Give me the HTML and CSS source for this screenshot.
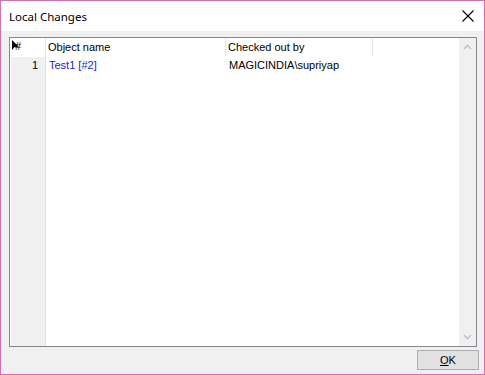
FILE: index.html
```html
<!DOCTYPE html>
<html lang="en">
<head>
    <meta charset="UTF-8">
    <title>Local Changes</title>
    <link rel="stylesheet" href="styles.css">
</head>
<body>

    <div class="window">
        <div class="titlebar">
            <span class="title">Local Changes</span>
            <svg class="close" width="12" height="12" viewBox="0 0 12 12">
                <path d="M0.5 0.5 L11.5 11.5 M11.5 0.5 L0.5 11.5" stroke="#000" stroke-width="1.1" fill="none"/>
            </svg>
        </div>

        <div class="content">
            <div class="grid">
                <div class="grid-main">
                    <div class="row-header-col">
                        <div class="corner">
                            <svg width="10" height="12" viewBox="0 0 10 12">
                                <path d="M1 1 L1 11 L3.5 8 L8 8 Z" fill="#000"/>
                            </svg>
                            <span class="hash">#</span>
                        </div>
                        <div class="row-num">1</div>
                    </div>
                    <div class="cols">
                        <div class="header">
                            <div class="hcell c-name">Object name</div>
                            <div class="hcell c-user">Checked out by</div>
                            <div class="hcell c-rest"></div>
                        </div>
                        <div class="row">
                            <div class="cell c-name link">Test1 [#2]</div>
                            <div class="cell c-user">MAGICINDIA\supriyap</div>
                        </div>
                    </div>
                </div>
                <div class="scrollbar">
                    <svg width="9" height="6" viewBox="0 0 9 6">
                        <path d="M1 5 L4.5 1.5 L8 5" stroke="#c2c2c2" stroke-width="1.6" fill="none"/>
                    </svg>
                    <svg width="9" height="6" viewBox="0 0 9 6">
                        <path d="M1 1 L4.5 4.5 L8 1" stroke="#c2c2c2" stroke-width="1.6" fill="none"/>
                    </svg>
                </div>
            </div>

            <div class="footer">
                <button class="ok"><u>O</u>K</button>
            </div>
        </div>
    </div>

</body>
</html>
```

FILE: styles.css
```css
body {
    margin: 0;
    font-family: 'Liberation Sans', Arial, sans-serif;
    font-size: 11px;
    background-color: #ffffff;
}

.window {
    width: 485px;
    height: 375px;
    box-sizing: border-box;
    border: 1px solid #e06aae;
    display: flex;
    flex-direction: column;
}

.titlebar {
    height: 30px;
    background-color: #ffffff;
    display: flex;
    align-items: center;
    justify-content: space-between;
    padding: 0 10px 0 8px;
}

.title {
    font-family: 'Noto Sans', 'Open Sans', sans-serif;
    font-size: 11.5px;
    color: #000;
}

.close {
    display: block;
}

.content {
    flex: 1;
    background-color: #f0f0f0;
    padding: 6px 7px 0 8px;
    display: flex;
    flex-direction: column;
}

.grid {
    height: 308px;
    border: 1px solid #828790;
    background-color: #ffffff;
    display: flex;
}

.grid-main {
    flex: 1;
    display: flex;
}

.row-header-col {
    width: 34px;
    margin-left: 1px;
    border-right: 1px solid #e3e3e3;
    background-color: #f0f0f0;
    display: flex;
    flex-direction: column;
}

.corner {
    height: 18px;
    background-color: #ffffff;
    display: flex;
    align-items: flex-start;
    padding-top: 1px;
}

.corner svg {
    display: block;
}

.hash {
    margin-left: -6px;
    margin-top: 1px;
}

.row-num {
    height: 16px;
    line-height: 16px;
    text-align: right;
    padding-right: 7px;
}

.cols {
    flex: 1;
    display: flex;
    flex-direction: column;
}

.header {
    height: 19px;
    display: flex;
}

.hcell {
    height: 18px;
    line-height: 18px;
    padding-left: 2px;
    border-right: 1px solid #e3e3e3;
    box-sizing: border-box;
}

.row {
    height: 16px;
    display: flex;
}

.cell {
    line-height: 16px;
    padding-left: 3px;
    box-sizing: border-box;
}

.c-name {
    width: 180px;
}

.c-user {
    width: 147px;
}

.c-rest {
    flex: 1;
    border-right: none;
}

.link {
    color: #2222dd;
}

.scrollbar {
    width: 17px;
    background-color: #f0f0f0;
    display: flex;
    flex-direction: column;
    justify-content: space-between;
    align-items: center;
    padding: 6px 0 6px;
}

.scrollbar svg {
    display: block;
}

.footer {
    display: flex;
    justify-content: flex-end;
    padding-top: 3px;
}

.ok {
    width: 62px;
    height: 20px;
    margin-right: -2px;
    background-color: #e1e1e1;
    border: 1px solid #adadad;
    font-family: 'Liberation Sans', Arial, sans-serif;
    font-size: 11px;
    color: #000;
    padding: 0;
}
```
